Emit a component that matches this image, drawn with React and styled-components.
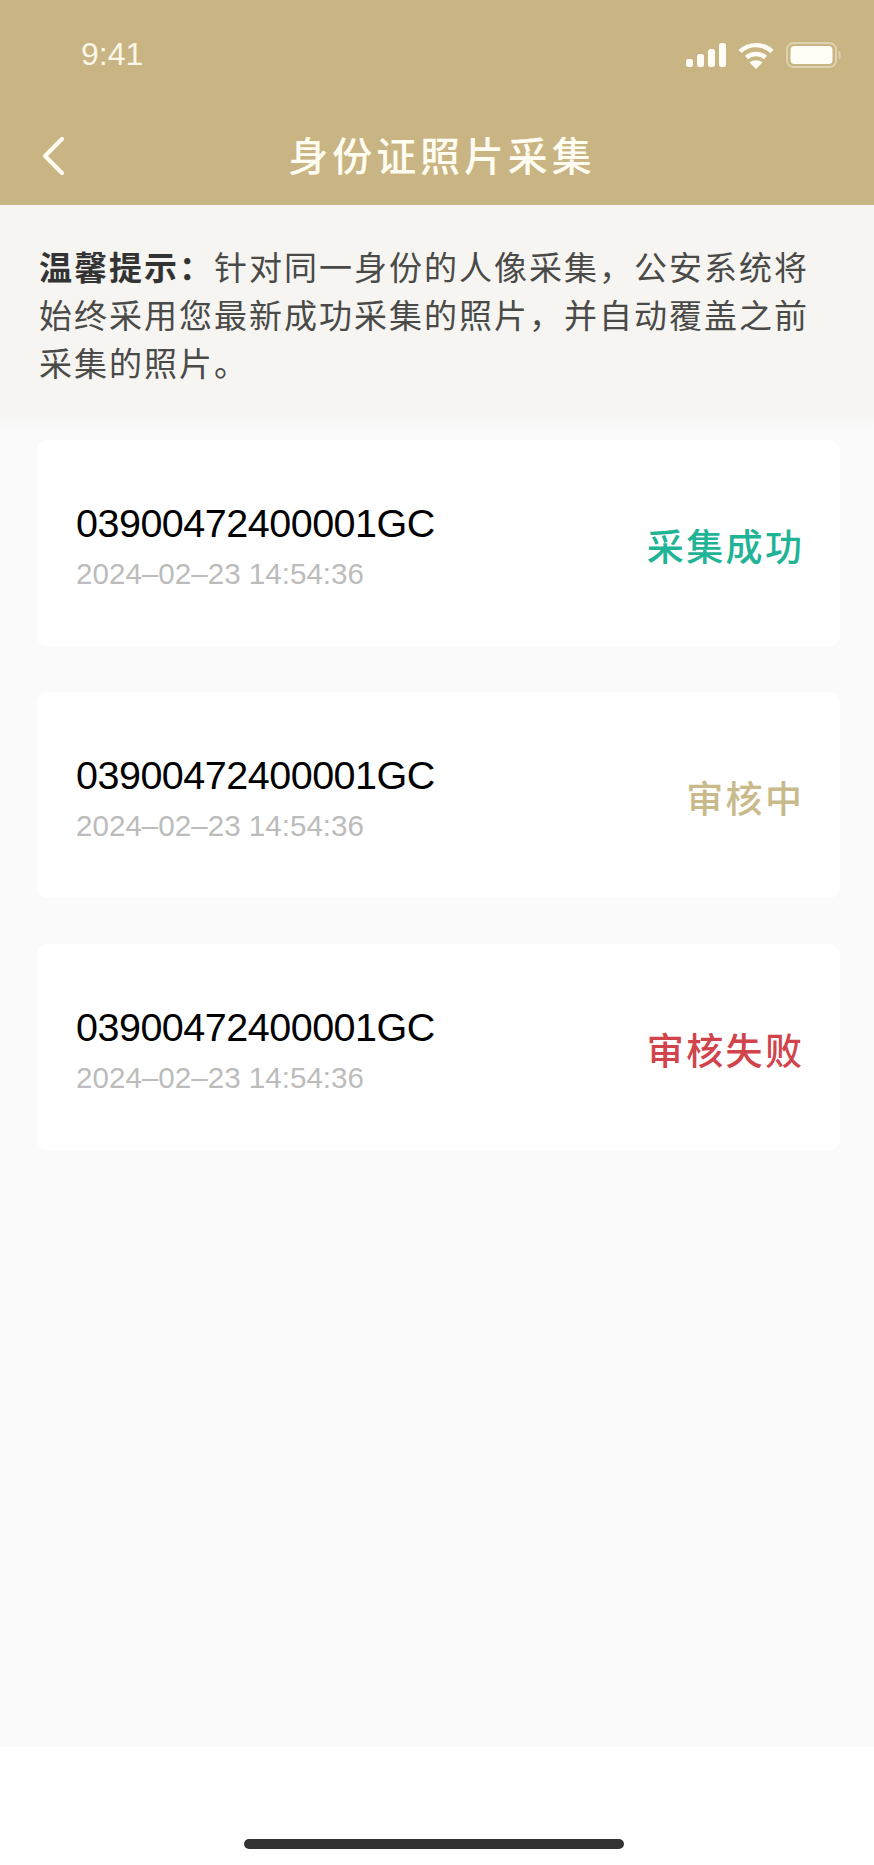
import React from 'react'
import styled, { createGlobalStyle } from 'styled-components'

const GlobalStyle = createGlobalStyle`
html, body {
  margin: 0;
  padding: 0;
  background: #fff;
}
`

const CJK = `"Noto Sans CJK SC", "Liberation Sans", sans-serif`
const LATIN = `"Liberation Sans", Arial, sans-serif`

const Page = styled.div`
  width: 874px;
  height: 1865px;
  display: flex;
  flex-direction: column;
  overflow: hidden;
  background: #fff;
`

const Header = styled.header`
  height: 205px;
  background: #c9b483;
  color: #fffdf5;
  display: flex;
  flex-direction: column;
`

const StatusBar = styled.div`
  height: 108px;
  padding: 0 33px 0 81px;
  display: flex;
  align-items: center;
  justify-content: space-between;
`

const Clock = styled.span`
  font-family: ${LATIN};
  font-size: 32px;
  color: #fbf7e9;
`

const StatusIcons = styled.div`
  display: flex;
  align-items: center;
  gap: 12px;
  margin-top: 2px;
`

const Nav = styled.div`
  height: 92px;
  display: grid;
  grid-template-columns: 1fr auto 1fr;
  align-items: center;
`

const BackButton = styled.div`
  padding: 3px 0 0 41px;
  display: flex;
  align-items: center;
`

const Title = styled.h1`
  margin: 0 0 0 10px;
  font-family: ${CJK};
  font-size: 40px;
  font-weight: 500;
  letter-spacing: 3.9px;
  line-height: 50px;
  color: #fffdf2;
`

const Body = styled.main`
  height: 1542px;
  background: #fafafa;
`

const Tip = styled.section`
  height: 223px;
  box-sizing: border-box;
  padding: 37px 56px 0 39px;
  background: linear-gradient(#f6f5f1 93%, #fafafa);
  font-family: ${CJK};
  font-size: 33px;
  line-height: 48px;
  letter-spacing: 2px;
  color: #4a4a48;
`

const TipLabel = styled.strong`
  font-weight: 700;
  color: #333;
`

const CardList = styled.div`
  padding: 12px 34px 0 37px;
  display: flex;
  flex-direction: column;
  gap: 46px;
`

const Card = styled.article`
  height: 206px;
  box-sizing: border-box;
  padding: 0 38px 0 39px;
  background: #fff;
  border-radius: 10px;
  display: flex;
  align-items: center;
  justify-content: space-between;
`

const CardInfo = styled.div`
  display: flex;
  flex-direction: column;
  gap: 11px;
  margin-top: 4px;
`

const CardId = styled.div`
  font-family: ${LATIN};
  font-size: 39.5px;
  letter-spacing: -0.5px;
  line-height: 46px;
  color: #000;
`

const CardTime = styled.div`
  font-family: ${LATIN};
  font-size: 29.6px;
  line-height: 34px;
  color: #bcbcbc;
`

const statusColors = {
  success: '#1fb496',
  pending: '#c9ba8c',
  failed: '#d1444b',
}

const Status = styled.div`
  font-family: ${CJK};
  font-size: 37px;
  font-weight: 500;
  letter-spacing: 2.4px;
  margin-right: -2.4px;
  margin-top: 4px;
  color: ${(props) => statusColors[props.$kind]};
`

const HomeArea = styled.div`
  flex: 1;
  display: flex;
  justify-content: center;
  align-items: flex-end;
  padding: 0 6px 16px 0;
`

const HomeBar = styled.div`
  width: 380px;
  height: 10px;
  border-radius: 5px;
  background: #333;
`

const SignalIcon = () => (
  <svg width="40" height="24" viewBox="0 0 40 24" fill="#fffdf5">
    <rect x="0" y="16" width="7" height="8" rx="2.5" />
    <rect x="11" y="11" width="7" height="13" rx="2.5" />
    <rect x="22" y="6" width="7" height="18" rx="2.5" />
    <rect x="33" y="0" width="7" height="24" rx="2.5" />
  </svg>
)

const WifiIcon = () => (
  <svg width="36" height="27" viewBox="0 0 36 27" fill="none" stroke="#fffdf5" strokeWidth="4.4">
    <path d="M2 9.5C11 1 25 1 34 9.5" />
    <path d="M8.5 15.5C13.8 10.8 22.2 10.8 27.5 15.5" />
    <path d="M18 27L11.6 20.4C15.2 17.4 20.8 17.4 24.4 20.4Z" fill="#fffdf5" stroke="none" />
  </svg>
)

const BatteryIcon = () => (
  <svg width="55" height="26" viewBox="0 0 55 26" fill="none">
    <rect x="1" y="1" width="49" height="24" rx="6.5" stroke="#ded2b1" strokeWidth="2" />
    <rect x="4.5" y="4" width="42" height="18" rx="4" fill="#fffdf5" />
    <rect x="52.5" y="9" width="2" height="8" rx="1" fill="#ded2b1" />
  </svg>
)

const BackIcon = () => (
  <svg width="24" height="40" viewBox="0 0 24 40" fill="none" stroke="#fffdf2" strokeWidth="4.2" strokeLinecap="round" strokeLinejoin="round">
    <path d="M21 3L4 20L21 37" />
  </svg>
)

const records = [
  { id: 1, status: '采集成功', kind: 'success' },
  { id: 2, status: '审核中', kind: 'pending' },
  { id: 3, status: '审核失败', kind: 'failed' },
]

const App = () => {
  return (
    <Page>
      <GlobalStyle />
      <Header>
        <StatusBar>
          <Clock>9:41</Clock>
          <StatusIcons>
            <SignalIcon />
            <WifiIcon />
            <BatteryIcon />
          </StatusIcons>
        </StatusBar>
        <Nav>
          <BackButton>
            <BackIcon />
          </BackButton>
          <Title>身份证照片采集</Title>
        </Nav>
      </Header>
      <Body>
        <Tip>
          <TipLabel>温馨提示：</TipLabel>针对同一身份的人像采集，公安系统将始终采用您最新成功采集的照片，并自动覆盖之前采集的照片。
        </Tip>
        <CardList>
          {records.map((record) => (
            <Card key={record.id}>
              <CardInfo>
                <CardId>03900472400001GC</CardId>
                <CardTime>2024–02–23 14:54:36</CardTime>
              </CardInfo>
              <Status $kind={record.kind}>{record.status}</Status>
            </Card>
          ))}
        </CardList>
      </Body>
      <HomeArea>
        <HomeBar />
      </HomeArea>
    </Page>
  )
}

export default App
